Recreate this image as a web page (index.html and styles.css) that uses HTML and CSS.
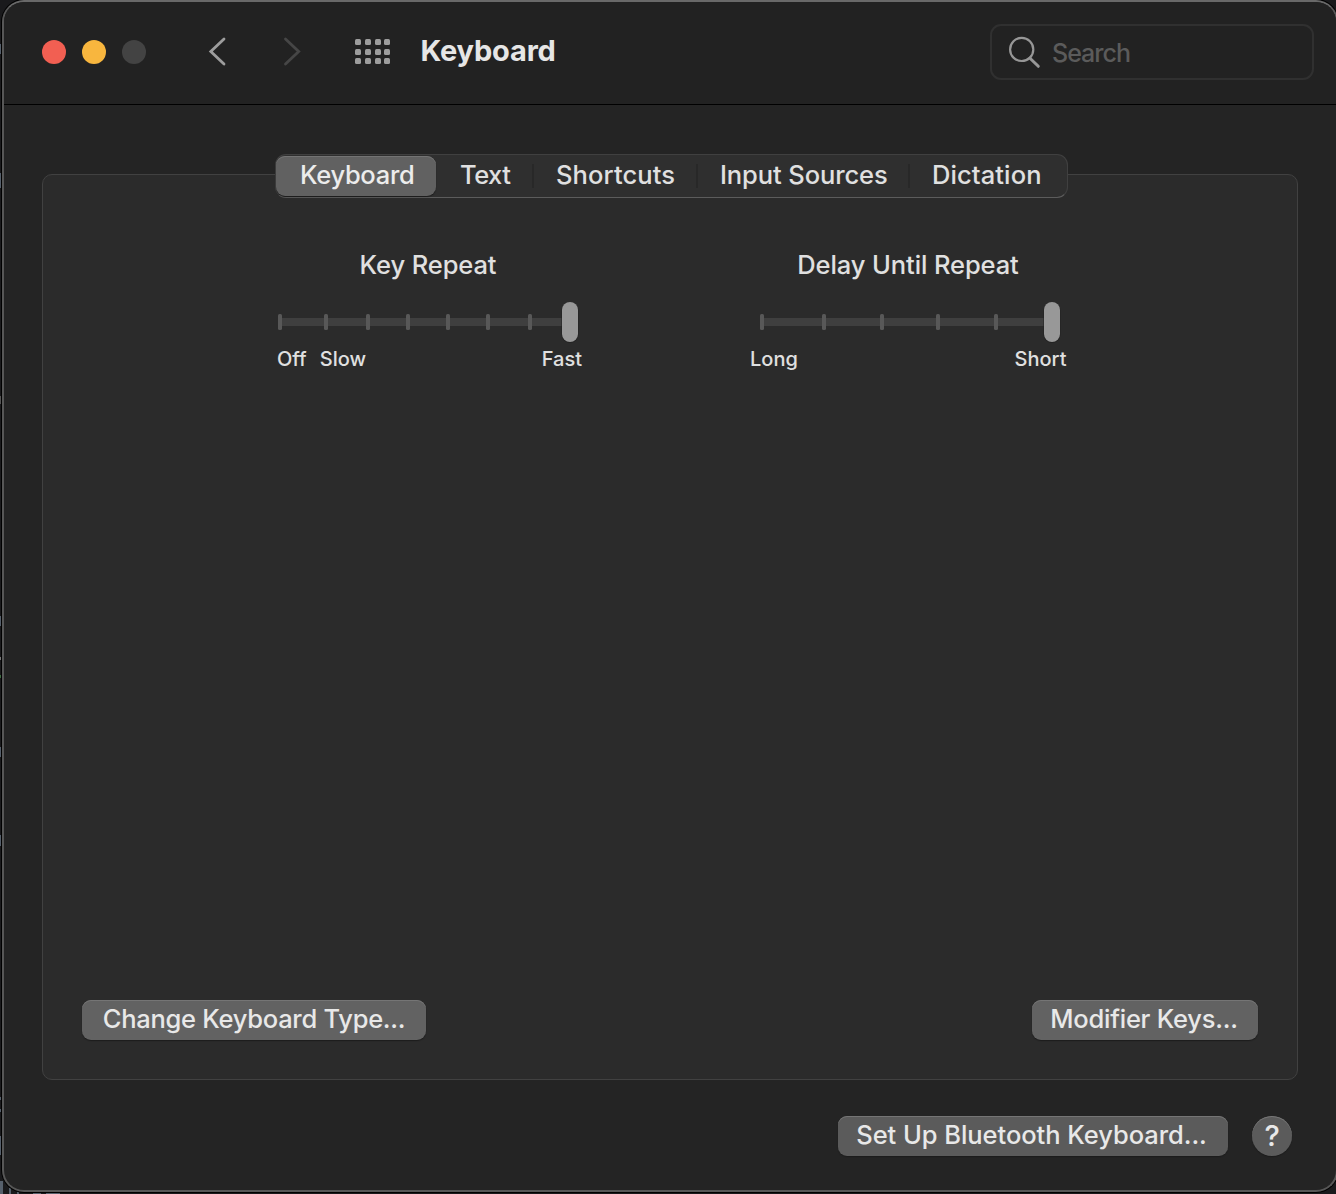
FILE: index.html
```html
<!DOCTYPE html>
<html lang="en">
<head>
<meta charset="utf-8">
<title>Keyboard</title>
<link rel="stylesheet" href="styles.css">
</head>
<body>
<div class="window">
  <header class="toolbar">
    <div class="lights"><span class="light close"></span><span class="light minimize"></span><span class="light zoom"></span></div>
    <nav class="history">
      <svg width="20" height="32" viewBox="0 0 20 32"><path d="M17 4 3.8 16.5 17 29" fill="none" stroke="#9d9d9d" stroke-width="2.8" stroke-linecap="round"/></svg>
      <svg width="20" height="32" viewBox="0 0 20 32"><path d="M3.5 4 16.7 16.5 3.5 29" fill="none" stroke="#464646" stroke-width="2.8" stroke-linecap="round"/></svg>
    </nav>
    <div class="grid-icon"><i></i><i></i><i></i><i></i><i></i><i></i><i></i><i></i><i></i><i></i><i></i><i></i></div>
    <h1 class="title">Keyboard</h1>
    <div class="search">
      <svg width="34" height="34" viewBox="0 0 34 34" fill="none" stroke="#979797" stroke-linecap="round"><circle cx="14.7" cy="14.4" r="11.6" stroke-width="2.2"/><path d="M23 23.2 31.3 31.3" stroke-width="3"/></svg>
      <span class="placeholder">Search</span>
    </div>
  </header>
  <main class="content">
    <section class="panel">
      <div class="tabs">
        <div class="tab selected"><span>Keyboard</span></div>
        <div class="tab tab-text"><span>Text</span></div>
        <div class="tab tab-shortcuts"><span>Shortcuts</span></div>
        <div class="tab tab-sources"><span>Input Sources</span></div>
        <div class="tab tab-dictation"><span>Dictation</span></div>
      </div>
      <div class="sliders">
        <div class="slider repeat">
          <h2 class="label">Key Repeat</h2>
          <svg class="track" width="306" height="44" viewBox="276 300 306 44">
            <path d="M280 318H570V326H280z" fill="#3f3f3f"/>
            <g fill="#585858"><rect x="278" y="314" width="4" height="16" rx="1.5"/><rect x="324" y="314" width="4" height="16" rx="1.5"/><rect x="366" y="314" width="4" height="16" rx="1.5"/><rect x="406" y="314" width="4" height="16" rx="1.5"/><rect x="446" y="314" width="4" height="16" rx="1.5"/><rect x="486" y="314" width="4" height="16" rx="1.5"/><rect x="528" y="314" width="4" height="16" rx="1.5"/></g>
            <rect x="561.5" y="302.5" width="17" height="40.5" rx="8.5" fill="#222"/>
            <rect x="562" y="302" width="16" height="40" rx="8" fill="#989898"/>
          </svg>
          <div class="marks"><span>Off</span><span class="slow">Slow</span><span class="end">Fast</span></div>
        </div>
        <div class="slider delay">
          <h2 class="label">Delay Until Repeat</h2>
          <svg class="track" width="318" height="44" viewBox="750 300 318 44">
            <path d="M762 318H1052V326H762z" fill="#3f3f3f"/>
            <g fill="#585858"><rect x="760" y="314" width="4" height="16" rx="1.5"/><rect x="822" y="314" width="4" height="16" rx="1.5"/><rect x="880" y="314" width="4" height="16" rx="1.5"/><rect x="936" y="314" width="4" height="16" rx="1.5"/><rect x="994" y="314" width="4" height="16" rx="1.5"/></g>
            <rect x="1043.5" y="302.5" width="17" height="40.5" rx="8.5" fill="#222"/>
            <rect x="1044" y="302" width="16" height="40" rx="8" fill="#989898"/>
          </svg>
          <div class="marks"><span>Long</span><span class="end">Short</span></div>
        </div>
      </div>
      <div class="actions">
        <div class="button change"><span>Change Keyboard Type...</span></div>
        <div class="button modifier"><span>Modifier Keys...</span></div>
      </div>
    </section>
    <footer class="footer">
      <div class="button bluetooth"><span>Set Up Bluetooth Keyboard...</span></div>
      <div class="button help">?</div>
    </footer>
  </main>
</div>
</body>
</html>
```
FILE: styles.css
```css
* { box-sizing: border-box; }
html { height: 100%; overflow: hidden; background: #1a1a1c; }
body {
  margin: 0;
  height: 1194px;
  padding-left: 2px;
  overflow: hidden;
  font-family: Inter, "Liberation Sans", sans-serif;
  font-weight: 450;
  color: #e0e0e0;
  /* slivers of the window behind */
  background:
    linear-gradient(#56606c, #56606c) 0 44px / 1px 10px no-repeat,
    linear-gradient(#56606c, #56606c) 0 173px / 1px 15px no-repeat,
    linear-gradient(#555, #555) 0 396px / 1px 8px no-repeat,
    linear-gradient(#56606c, #56606c) 0 616px / 1px 10px no-repeat,
    linear-gradient(#777, #777) 0 657px / 1px 3px no-repeat,
    linear-gradient(#3c6b40, #3c6b40) 0 675px / 1px 3px no-repeat,
    linear-gradient(#56606c, #56606c) 0 747px / 1px 10px no-repeat,
    linear-gradient(#56606c, #56606c) 0 835px / 1px 11px no-repeat,
    linear-gradient(#56606c, #56606c) 0 1097px / 1px 3px no-repeat,
    linear-gradient(#56606c, #56606c) 0 1109px / 1px 3px no-repeat,
    linear-gradient(#56606c, #56606c) 0 1136px / 1px 19px no-repeat,
    linear-gradient(#56606c, #56606c) 0 1181px / 3px 13px no-repeat,
    linear-gradient(#56606c, #56606c) 9px 1188px / 2px 6px no-repeat,
    linear-gradient(#56606c, #56606c) 17px 1190px / 2px 4px no-repeat,
    linear-gradient(#56606c, #56606c) 33px 1193px / 8px 1px no-repeat,
    linear-gradient(#56606c, #56606c) 46px 1193px / 14px 1px no-repeat,
    #1a1a1c;
}
.window {
  width: 1336px;
  height: 1192px;
  border: 2px solid #575757;
  border-top-color: #696969;
  border-radius: 22px;
  background: #242424;
  box-shadow: 0 0 0 1px #000;
  display: flex;
  flex-direction: column;
}
.toolbar {
  height: 103px;
  flex: none;
  border-bottom: 1px solid #000;
  border-radius: 20px 20px 0 0;
  background: #222;
  display: flex;
  align-items: center;
  padding: 0 22px 3px 38px;
}
.lights { display: flex; gap: 16px; margin-top: 1px; }
.light { width: 24px; height: 24px; border-radius: 50%; }
.close { background: #f25f52; }
.minimize { background: #f8b63e; }
.zoom { background: #434343; }
.history { display: flex; gap: 55px; margin-left: 61px; margin-top: -1px; }
.history svg { display: block; }
.grid-icon { display: grid; grid-template-columns: repeat(4, 6px); gap: 3.8px; margin-left: 53px; }
.grid-icon i { height: 6px; border-radius: 1.5px; background: #9d9d9d; }
.title { margin: -1px 0 0 30px; font-size: 29px; line-height: 36px; font-weight: 700; letter-spacing: -0.15px; color: #e6e6e6; }
.search {
  width: 324px;
  height: 56px;
  margin-left: auto;
  border: 2px solid #303030;
  border-radius: 11px;
  display: flex;
  align-items: center;
  padding-left: 15px;
}
.placeholder { font-size: 25px; line-height: 32px; margin: 3px 0 0 11px; letter-spacing: -1px; color: #5b5b5b; }
.content { flex: 1; padding: 69px 38px 34px; display: flex; flex-direction: column; }
.panel {
  height: 906px;
  border: 1px solid #414141;
  border-radius: 10px;
  background: #2b2b2b;
  display: flex;
  flex-direction: column;
}
.tabs {
  width: 793px;
  height: 44px;
  margin: -21px 0 0 232px;
  border: 1px solid #404040;
  border-bottom-color: #5c5c5c;
  border-radius: 11px;
  background: #2f2f2f;
  display: flex;
  align-items: center;
  font-size: 25.5px;
  line-height: 32px;
}
.tab { height: 24px; display: flex; align-items: center; white-space: nowrap; border-left: 2px solid #282828; padding-bottom: 2px; }
.selected { width: 160px; height: 40px; border: 0; border-radius: 9px; background: #616161; box-shadow: inset 0 1px #747474, 0 1px 1px #1c1c1c; padding-left: 24px; letter-spacing: -0.3px; color: #ececec; }
.tab-text { width: 96px; padding-left: 24px; border: 0; letter-spacing: -0.5px; }
.tab-shortcuts { width: 164px; padding-left: 22px; letter-spacing: 0.1px; }
.tab-sources { width: 212px; padding-left: 22px; letter-spacing: -0.1px; }
.tab-dictation { padding-left: 22px; letter-spacing: 0.1px; }
.sliders { display: flex; margin: 51px 0 0 233px; }
.slider { display: flex; flex-direction: column; }
.repeat { width: 306px; }
.delay { width: 318px; margin-left: 168px; }
.label { margin: 0; padding-right: 2px; font-size: 25.5px; font-weight: 450; line-height: 32px; letter-spacing: -0.1px; text-align: center; white-space: nowrap; }
.track { display: block; margin-top: 19px; }
.marks { display: flex; font-size: 20px; line-height: 26px; margin-top: 2px; }
.repeat .marks { padding-left: 1px; }
.delay .marks { padding-right: 1.5px; }
.slow { margin-left: 13px; }
.end { margin-left: auto; }
.actions { margin-top: auto; padding: 0 39px 39px; display: flex; justify-content: space-between; }
.button {
  height: 40px;
  border-radius: 9px;
  background: #626262;
  box-shadow: inset 0 1px #757575, 0 1px 1px #1c1c1c;
  color: #e8e8e8;
  font-size: 25.5px;
  line-height: 38px;
  letter-spacing: -0.2px;
  text-align: center;
  white-space: nowrap;
}
.change { width: 344px; letter-spacing: -0.27px; }
.modifier { width: 226px; padding-right: 2px; letter-spacing: -0.25px; }
.footer { display: flex; justify-content: flex-end; gap: 24px; margin-top: 36px; padding-right: 6px; }
.bluetooth { width: 390px; padding-right: 3px; letter-spacing: -0.05px; background: #5b5b5b; }
.help { width: 40px; border-radius: 50%; background: #5b5b5b; font-size: 29px; line-height: 40px; }
```
